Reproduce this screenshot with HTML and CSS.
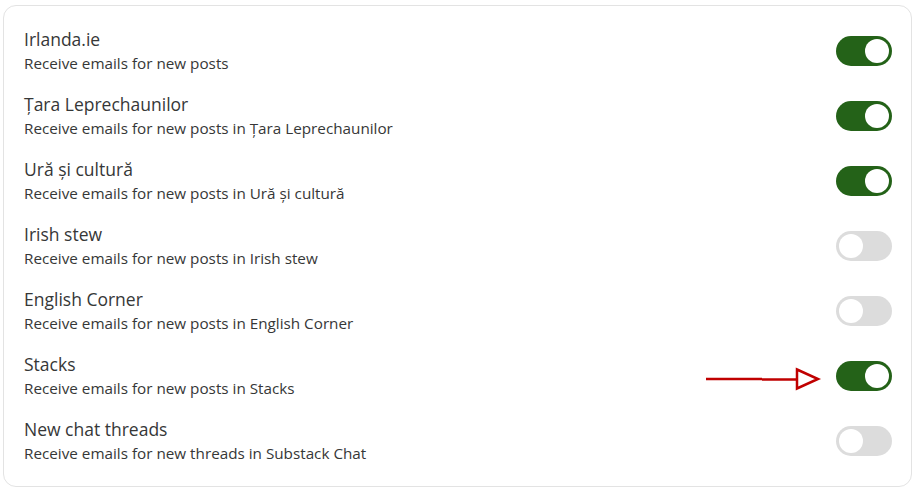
FILE: index.html
```html
<!DOCTYPE html>
<html>
<head>
<meta charset="utf-8">
<link rel="stylesheet" href="styles.css">
</head>
<body>
<div class="card">
  <div class="row">
    <div class="text"><div class="title">Irlanda.ie</div><div class="sub">Receive emails for new posts</div></div>
    <div class="toggle on"><span class="knob"></span></div>
  </div>
  <div class="row">
    <div class="text"><div class="title">Țara Leprechaunilor</div><div class="sub">Receive emails for new posts in Țara Leprechaunilor</div></div>
    <div class="toggle on"><span class="knob"></span></div>
  </div>
  <div class="row">
    <div class="text"><div class="title">Ură și cultură</div><div class="sub">Receive emails for new posts in Ură și cultură</div></div>
    <div class="toggle on"><span class="knob"></span></div>
  </div>
  <div class="row">
    <div class="text"><div class="title">Irish stew</div><div class="sub">Receive emails for new posts in Irish stew</div></div>
    <div class="toggle"><span class="knob"></span></div>
  </div>
  <div class="row">
    <div class="text"><div class="title">English Corner</div><div class="sub">Receive emails for new posts in English Corner</div></div>
    <div class="toggle"><span class="knob"></span></div>
  </div>
  <div class="row">
    <div class="text"><div class="title">Stacks</div><div class="sub">Receive emails for new posts in Stacks</div></div>
    <div class="toggle on"><span class="knob"></span></div>
    <svg class="arrow" width="116" height="24" viewBox="0 0 116 24">
      <path d="M0 12 H56 M56 12.5 H90" stroke="#c00000" stroke-width="2.5" fill="none"/>
      <path d="M91 2.5 L112 12 L91 21.5 Z" stroke="#c00000" stroke-width="2.5" fill="none" stroke-linejoin="miter"/>
    </svg>
  </div>
  <div class="row">
    <div class="text"><div class="title">New chat threads</div><div class="sub">Receive emails for new threads in Substack Chat</div></div>
    <div class="toggle"><span class="knob"></span></div>
  </div>
</div>
</body>
</html>
```
FILE: styles.css
```css
html, body {
  margin: 0;
  padding: 0;
  background: #ffffff;
}
body {
  font-family: "Open Sans", "Noto Sans", sans-serif;
  color: #363737;
}
.card {
  box-sizing: border-box;
  margin: 5px 0 0 3px;
  width: 909px;
  height: 482px;
  border: 1px solid #e3e3e3;
  border-radius: 13px;
  padding: 12px 19px 13px 20px;
  display: flex;
  flex-direction: column;
}
.row {
  position: relative;
  height: 65px;
  display: flex;
  align-items: center;
  justify-content: space-between;
}
.text {
  display: flex;
  flex-direction: column;
  gap: 3px;
}
.title {
  font-size: 17.5px;
  line-height: 22px;
}
.sub {
  font-size: 15.25px;
  line-height: 20px;
}
.toggle {
  width: 56px;
  height: 30px;
  border-radius: 15px;
  background: #dcdcdc;
  display: flex;
  align-items: center;
  padding: 0 3px;
  box-sizing: border-box;
  justify-content: flex-start;
  margin-top: 1px;
}
.toggle.on {
  background: #246218;
  justify-content: flex-end;
}
.knob {
  width: 24px;
  height: 24px;
  border-radius: 50%;
  background: #ffffff;
}
.arrow {
  position: absolute;
  left: 682px;
  top: 24px;
}
```
